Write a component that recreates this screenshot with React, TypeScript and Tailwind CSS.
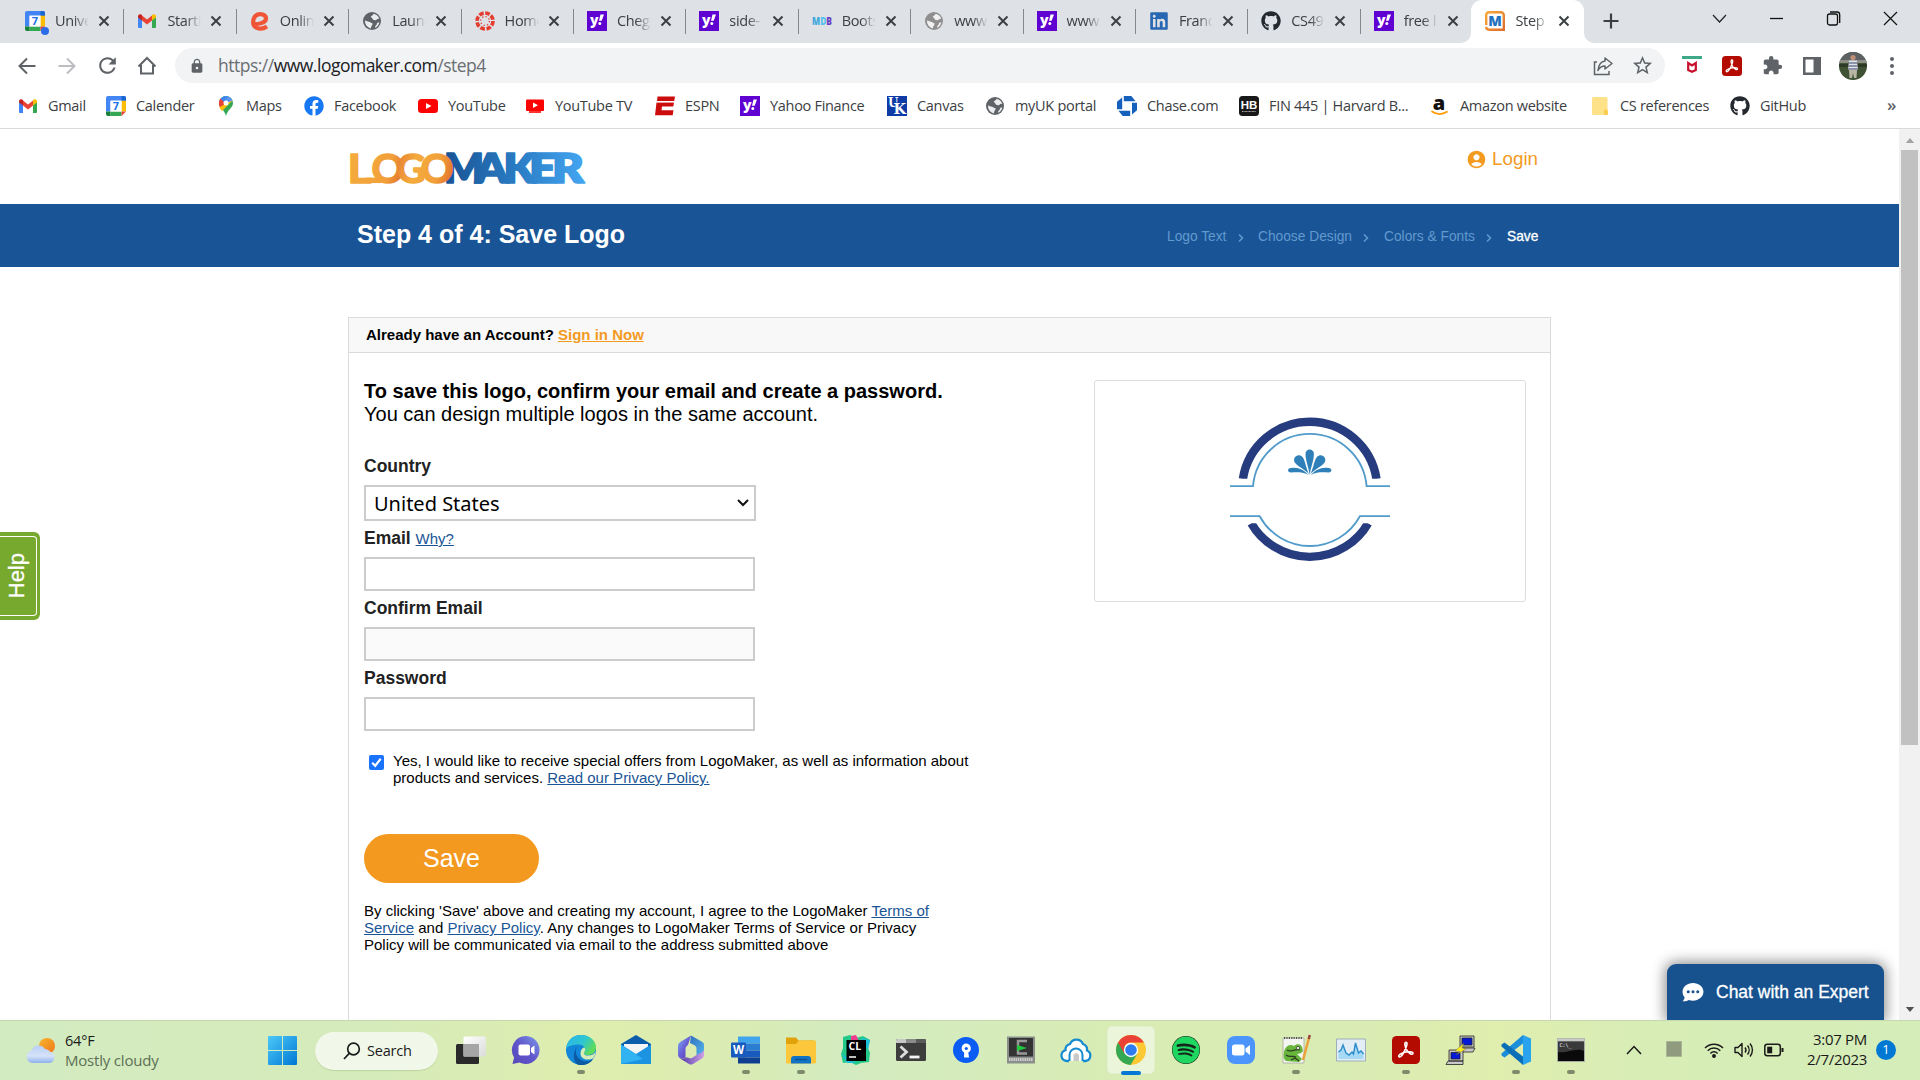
import React from "react";
import { FaGithub, FaLinkedin, FaFacebook, FaSpotify } from "react-icons/fa";
import { MdExtension, MdLock, MdStarBorder, MdRefresh, MdAccountCircle } from "react-icons/md";

/* ---------- small icons (20 x 20) ---------- */

const Svg20 = ({ children }: { children: React.ReactNode }) => (
  <svg viewBox="0 0 20 20" className="block size-5 shrink-0 overflow-visible">
    {children}
  </svg>
);

const Calendar = ({ dot = false }: { dot?: boolean }) => (
  <Svg20>
    <path d="M2 0h16a2 2 0 0 1 2 2v3H0V2a2 2 0 0 1 2-2z" fill="#4285f4" />
    <path d="M0 2h4.500v13.500H0z" fill="#4285f4" />
    <path d="M15.500 4.500H20v11h-4.500z" fill="#fbbc04" />
    <path d="M15.500 0H18a2 2 0 0 1 2 2v2.500h-4.500z" fill="#1967d2" />
    <path d="M4.500 15.500h11V20h-11z" fill="#34a853" />
    <path d="M0 15.500h4.500V20H2a2 2 0 0 1-2-2z" fill="#188038" />
    <path d="M15.500 15.500H20L15.500 20z" fill="#ea4335" />
    <path d="M4.500 4.500h11v11h-11z" fill="#fff" />
    <text x="10" y="14" textAnchor="middle" fontSize="11" fontWeight="700" fontFamily="Open Sans, sans-serif" fill="#1a73e8">7</text>
    {dot && <circle cx="20" cy="20" r="4" fill="#2b6de8" />}
  </Svg20>
);

const Gmail = () => (
  <Svg20>
    <path d="M1 5v11a1 1 0 0 0 1 1h3V8z" fill="#4285f4" />
    <path d="M19 5v11a1 1 0 0 1-1 1h-3V8z" fill="#34a853" />
    <path d="M5 4.500l5 4 5-4v5L10 13.500 5 9.500z" fill="#ea4335" />
    <path d="M1 5.500C1 3 3.500 2.500 5 4v5.500L1 6.500z" fill="#c5221f" />
    <path d="M19 5.500C19 3 16.500 2.500 15 4v5.500l4-3z" fill="#fbbc04" />
  </Svg20>
);

const Expo = () => (
  <Svg20>
    <path d="M3 13c5 .5 13-1 13-5.500C16 2 5.500 1 3.500 8.500 1.500 17 10 20 17 15.500" fill="none" stroke="#f05537" strokeWidth="4.200" />
  </Svg20>
);

const Globe = ({ light = false }: { light?: boolean }) => (
  <svg viewBox="0 0 20 20" className={light ? "block size-5 shrink-0 text-[#8f8f8f]" : "block size-5 shrink-0 text-[#5f6368]"}>
    <circle cx="10" cy="10" r="9" fill="currentColor" />
    <path
      d="M3 9.500c1.500.3 2.500 1.200 4 1.200 1 0 1.500 1.200 2.800 1.400 1 .2 1 1.500.2 2.200-.8.800-.7 2-1.300 3.200A7.500 7.500 0 0 1 3 9.500zM11.500 2.700A7.500 7.500 0 0 1 17.300 8c-1.300-.6-2-.2-2.800.8-.9 1-2.200.3-3.300 0-1-.4-.5-1.600-1.400-2-1.300-.6-1-1.700 0-2 .9-.3 1.400-1 1.700-2.100zM17.300 11.500a7.500 7.500 0 0 1-4.300 5.300c0-1.300.3-2 1.200-2.500.900-.6.300-2 1.300-2.600.6-.3 1.200-.3 1.800-.2z"
      fill="#fff"
      fillOpacity=".88"
    />
  </svg>
);

const CanvasRing = () => (
  <Svg20>
    <circle cx="10" cy="10" r="8" fill="none" stroke="#e43d30" strokeWidth="3.600" strokeDasharray="4.700 1.580" />
    <circle cx="10" cy="10" r="4.400" fill="none" stroke="#e43d30" strokeWidth="1.300" strokeDasharray="1.300 2.156" />
  </Svg20>
);

const Yahoo = () => (
  <Svg20>
    <path d="M0 0h20v20H0z" fill="#5f01d1" />
    <text x="3" y="14" fontSize="14" fontWeight="800" fontFamily="Open Sans, sans-serif" fill="#fff">y</text>
    <path d="M13.500 3.500H17l-2.300 6.300h-2.700z" fill="#fff" />
    <circle cx="12.800" cy="12.500" r="1.500" fill="#fff" />
  </Svg20>
);

const Mdb = () => (
  <Svg20>
    <text x="0" y="13.500" fontSize="10" fontWeight="800" fontFamily="Open Sans, sans-serif" textLength="20" lengthAdjust="spacingAndGlyphs">
      <tspan fill="#3fa9dc">M</tspan>
      <tspan fill="#55c0e8">D</tspan>
      <tspan fill="#6a3fc0">B</tspan>
    </text>
  </Svg20>
);

const LogoFavicon = () => (
  <Svg20>
    <defs>
      <linearGradient id="fav" x1="0" x2="1" y1="0" y2="1">
        <stop offset="0" stopColor="#f6a836" />
        <stop offset="1" stopColor="#e0702c" />
      </linearGradient>
    </defs>
    <path d="M1.200 14V4a3 3 0 0 1 3-2.800h11.600a3 3 0 0 1 3 3v14.600H4a3 3 0 0 1-2.800-3" fill="none" stroke="url(#fav)" strokeWidth="2.400" />
    <text x="10" y="15" textAnchor="middle" fontSize="14" fontWeight="800" fontFamily="Open Sans, sans-serif" fill="#2271bd">M</text>
  </Svg20>
);

const Maps = () => (
  <Svg20>
    <path d="M10 0a7 7 0 0 1 7 7c0 5-5.500 6.500-7 13C8.500 13.500 3 12 3 7a7 7 0 0 1 7-7z" fill="#34a853" />
    <path d="M4.500 2.500L10 7l-5.500 5C1.800 8.500 3 4.500 4.500 2.500z" fill="#ea4335" />
    <path d="M4.500 2.700A7 7 0 0 1 12 .3L8 6z" fill="#4285f4" />
    <path d="M12 .3A7 7 0 0 1 16.500 4.500L12 8 8 6z" fill="#5a95f5" />
    <path d="M16.500 4.500L6 15c-1-1.200-1.700-2-2.300-3.800l6.300-4z" fill="#fbbc04" />
    <circle cx="10" cy="7" r="2.500" fill="#fff" />
  </Svg20>
);

const YouTube = () => (
  <Svg20>
    <rect x="0" y="3" width="20" height="14" rx="3.500" fill="#f00" />
    <path d="M8 7l5.500 3L8 13z" fill="#fff" />
  </Svg20>
);

const YouTubeTV = () => (
  <Svg20>
    <rect x="1" y="3.500" width="18" height="11.500" rx="1" fill="#f00" />
    <path d="M4 15h12v2H4z" fill="#f33" />
    <path d="M8 6.500l5 2.800-5 2.800z" fill="#fff" />
  </Svg20>
);

const Espn = () => (
  <Svg20>
    <path d="M2.500 0.500H20l-.8 4.500H2zM1.500 6.500H19l-.7 4H7l-.5 3.800H18.500l-.8 5H0z" fill="#cc0c0c" />
    <path d="M0 5.700h20" stroke="#fff" strokeWidth="1" />
  </Svg20>
);

const UK = () => (
  <Svg20>
    <path d="M0 0h20v20H0z" fill="#0e3ba6" />
    <g fontWeight="700" fontFamily="DejaVu Serif, serif" fill="#fff">
      <text x="1" y="11" fontSize="12">U</text>
      <text x="6.500" y="17.500" fontSize="14" stroke="#0e3ba6" strokeWidth="1" paintOrder="stroke" textLength="12.500" lengthAdjust="spacingAndGlyphs">K</text>
    </g>
  </Svg20>
);

const Chase = () => (
  <Svg20>
    <g fill="#1560bd">
      <path d="M6.800 0h7.500l4.300 5.300H6.800z" />
      <path d="M20 6.800v7.500l-5 4.300V6.800z" />
      <path d="M13.200 20H5.700l-4.300-5.300h11.800z" />
      <path d="M0 13.200V5.700l5.200-4.300v11.800z" />
    </g>
  </Svg20>
);

const Harvard = () => (
  <Svg20>
    <rect width="20" height="20" rx="3.500" fill="#191919" />
    <text x="10" y="13" textAnchor="middle" fontSize="11.500" fontWeight="700" fontFamily="Liberation Sans, sans-serif" fill="#fff">HB</text>
    <path d="M3 15.500h14" stroke="#aaa" strokeWidth="1" strokeDasharray="1 .4" />
  </Svg20>
);

const Amazon = () => (
  <Svg20>
    <text x="9" y="13.500" textAnchor="middle" fontSize="20" fontWeight="800" fontFamily="Open Sans, sans-serif" fill="#111">a</text>
    <path d="M2 15.500c5 3.500 10.500 3 15 .3" fill="none" stroke="#f90" strokeWidth="1.700" strokeLinecap="round" />
  </Svg20>
);

const Folder = () => (
  <Svg20>
    <path d="M2 2.500A1.500 1.500 0 0 1 3.500 1H16a1.500 1.500 0 0 1 1.500 1.500v11L18 18a1 1 0 0 1-1 1H3.500A1.500 1.500 0 0 1 2 17.500z" fill="#fde28a" />
    <path d="M14 19v-4.500a1 1 0 0 1 1-1h2.500L18 18a1 1 0 0 1-1 1z" fill="#f8cd50" />
  </Svg20>
);

const AcrobatGlyph = ({ scale }: { scale: string }) => (
  <path
    transform={scale}
    d="M10 4.200c1.800 0 .8 3-.8 6.500-1.500 3.200-3.400 5.500-4.400 5.200-1.600-.7 1.200-3.200 5.400-3.900 4-.6 5.800.2 5.500 1.200-.6 1.600-3.300-.3-4.800-2.500C9.500 8.600 8.600 4.200 10 4.200z"
    fill="none"
    stroke="#fff"
    strokeWidth="1.300"
  />
);

/* ---------- browser chrome ---------- */

const tabs = [
  { t: "Unive", i: <Calendar dot /> },
  { t: "Startin", i: <Gmail /> },
  { t: "Online", i: <Expo /> },
  { t: "Launc", i: <Globe /> },
  { t: "Home", i: <CanvasRing /> },
  { t: "Chegg", i: <Yahoo /> },
  { t: "side-", i: <Yahoo /> },
  { t: "Boots", i: <Mdb /> },
  { t: "www.", i: <Globe light /> },
  { t: "www.", i: <Yahoo /> },
  { t: "Franc", i: <FaLinkedin className="block size-5 text-[#2867b2]" /> },
  { t: "CS49", i: <FaGithub className="block size-5 text-[#24292f]" /> },
  { t: "free l", i: <Yahoo /> },
  { t: "Step", i: <LogoFavicon />, active: true },
];

const TabStrip = () => (
  <div className="flex h-[43px] w-full shrink-0 bg-[#dee1e6] pl-[11px]">
    {tabs.map((tab, n) => (
      <div
        key={n}
        className={
          "relative flex w-[112.4px] shrink-0 items-center pl-[14px] pb-px " +
          (tab.active ? "-ml-[0.600px] rounded-t-[11px] bg-white" : "")
        }
      >
        {tab.active && (
          <>
            <svg className="absolute -left-[10px] bottom-0 size-[10px]" viewBox="0 0 10 10"><path d="M10 0v10H0A10 10 0 0 0 10 0z" fill="#fff" /></svg>
            <svg className="absolute -right-[10px] bottom-0 size-[10px]" viewBox="0 0 10 10"><path d="M0 0v10h10A10 10 0 0 1 0 0z" fill="#fff" /></svg>
          </>
        )}
        {tab.i}
        <span className="ml-[10px] w-[34px] overflow-hidden whitespace-nowrap text-[14.500px] tracking-[-0.35px] text-[#3c4043] [mask-image:linear-gradient(to_right,#000_55%,transparent)]">
          {tab.t}
        </span>
        <svg viewBox="0 0 12 12" className="ml-[9px] size-[12px] shrink-0" stroke="#3c4043" strokeWidth="2"><path d="M1.500 1.500l9 9M10.500 1.500l-9 9" /></svg>
        {n < 12 && <div className="absolute -right-[1px] top-[9px] h-[25px] w-px bg-[#84878b]" />}
      </div>
    ))}
    <div className="ml-[19px] flex items-center pb-px">
      <svg viewBox="0 0 16 16" className="size-4" stroke="#3c4043" strokeWidth="2.200"><path d="M8 .5v15M.5 8h15" /></svg>
    </div>
    <div className="ml-[93px] flex items-center gap-[42px] pb-[6px]">
      <svg viewBox="0 0 15 15" className="size-[15px]" fill="none" stroke="#222" strokeWidth="1.200"><path d="M1 4l6.500 7L14 4" /></svg>
      <svg viewBox="0 0 15 15" className="size-[15px]" fill="none" stroke="#111" strokeWidth="1.300"><path d="M1 7.500h13" /></svg>
      <svg viewBox="0 0 15 15" className="size-[15px]" fill="none" stroke="#111" strokeWidth="1.300"><rect x="1.500" y="3" width="10" height="11" rx="2" /><path d="M4 1h7a2.700 2.700 0 0 1 2.700 2.700V12" /></svg>
      <svg viewBox="0 0 15 15" className="size-[15px]" fill="none" stroke="#111" strokeWidth="1.200"><path d="M1 1l13 13M14 1L1 14" /></svg>
    </div>
  </div>
);

const Toolbar = () => (
  <div className="flex h-[45px] w-full shrink-0 items-center bg-white pl-[17px]">
    <svg viewBox="0 0 20 20" className="size-5" fill="none" stroke="#5f6368" strokeWidth="2"><path d="M18.500 10H3M10 2.500L2.500 10l7.500 7.500" /></svg>
    <svg viewBox="0 0 20 20" className="ml-5 size-5" fill="none" stroke="#bcbec1" strokeWidth="2"><path d="M1.500 10H17M10 2.500l7.500 7.500-7.500 7.500" /></svg>
    <MdRefresh className="ml-[18px] size-[25px] text-[#5f6368]" />
    <svg viewBox="0 0 20 20" className="ml-[17px] size-5" fill="none" stroke="#5f6368" strokeWidth="2"><path d="M1.500 10.500L10 2l8.500 8.500M4 9v8.500h12V9" /></svg>
    <div className="ml-[18px] flex h-[35px] w-[1490px] items-center rounded-full bg-[#f1f3f4] pl-[14px] pr-[11px]">
      <MdLock className="size-4 text-[#5f6368]" />
      <div className="ml-[13px] grow whitespace-nowrap text-[17.500px] tracking-[-0.5px] text-[#6a6e73]">
        https://<span className="text-[#202124]">www.logomaker.com</span>/step4
      </div>
      <svg viewBox="0 0 20 20" className="mr-[18px] size-5" fill="none" stroke="#5f6368" strokeWidth="1.500"><path d="M4 6H1.500v12.500H16V15" /><path d="M12 2l7 5.500-7 5.500V10c-3.500 0-5.500 1.500-7 4.500C5.500 9 8 5.500 12 5z" strokeLinejoin="round" /></svg>
      <MdStarBorder className="size-[23px] text-[#5f6368]" />
    </div>
    <svg viewBox="0 0 20 20" className="ml-[17px] size-5"><path d="M0 0h20v3H0z" fill="#3fa98a" /><path d="M6.200 14V7L10 9.500 13.800 7V14L10 15.800z" fill="none" stroke="#c8102e" strokeWidth="2.200" /></svg>
    <svg viewBox="0 0 20 20" className="ml-5 size-5"><rect width="20" height="20" rx="3.500" fill="#b30b00" /><AcrobatGlyph scale="translate(-.2 -.2)" /></svg>
    <MdExtension className="ml-5 size-[21px] text-[#5f6368]" />
    <svg viewBox="0 0 20 20" className="ml-[19px] size-5"><path d="M1 1h18v18H1z" fill="#5f6368" /><path d="M3.500 3.500h8v13h-8z" fill="#fff" /></svg>
    <svg viewBox="0 0 28 28" className="ml-[17px] size-7">
      <defs><clipPath id="av"><circle cx="14" cy="14" r="14" /></clipPath></defs>
      <g clipPath="url(#av)">
        <path d="M0 0h28v28H0z" fill="#3f5233" />
        <path d="M0 0h28v8H0z" fill="#5d6164" />
        <path d="M0 8h28v3H0z" fill="#8d8f86" />
        <path d="M0 12h28v3H0z" fill="#2d3b26" />
        <circle cx="14" cy="5.500" r="2.600" fill="#c08f78" />
        <path d="M10 8.500h8l1 9.500H9z" fill="#dfe3ea" />
        <path d="M9.500 11h9M9.500 14h9M9 17h10" stroke="#3c4566" strokeWidth="1" />
        <path d="M10 18h8l-.5 8h-2.500l-1-5-1 5h-2.500z" fill="#b9b6a4" />
      </g>
    </svg>
    <svg viewBox="0 0 6 20" className="ml-[22px] h-5 w-[6px]" fill="#5f6368"><circle cx="3" cy="3" r="2" /><circle cx="3" cy="10" r="2" /><circle cx="3" cy="17" r="2" /></svg>
  </div>
);

const bookmarks = [
  { t: "Gmail", w: 88, i: <Gmail /> },
  { t: "Calender", w: 110, i: <Calendar /> },
  { t: "Maps", w: 88, i: <Maps /> },
  { t: "Facebook", w: 114, i: <FaFacebook className="block size-5 text-[#1877f2]" /> },
  { t: "YouTube", w: 107, i: <YouTube /> },
  { t: "YouTube TV", w: 130, i: <YouTubeTV /> },
  { t: "ESPN", w: 85, i: <Espn /> },
  { t: "Yahoo Finance", w: 147, i: <Yahoo /> },
  { t: "Canvas", w: 98, i: <UK /> },
  { t: "myUK portal", w: 132, i: <Globe /> },
  { t: "Chase.com", w: 122, i: <Chase /> },
  { t: "FIN 445 | Harvard B...", w: 191, i: <Harvard /> },
  { t: "Amazon website", w: 160, i: <Amazon /> },
  { t: "CS references", w: 140, i: <Folder /> },
  { t: "GitHub", w: 157, i: <FaGithub className="block size-5 text-[#24292f]" /> },
];

const Bookmarks = () => (
  <div className="flex h-[41px] w-full shrink-0 items-center border-b border-[#d8dadd] bg-white pb-[4px] pl-[18px]">
    {bookmarks.map((b) => (
      <div key={b.t} className="flex shrink-0 items-center gap-[10px]" style={{ width: b.w }}>
        {b.i}
        <span className="whitespace-nowrap text-[14.500px] tracking-[-0.3px] text-[#3c4043]">{b.t}</span>
      </div>
    ))}
    <span className="pb-[4px] text-[17px] font-semibold leading-none text-[#5f6368]">»</span>
  </div>
);

/* ---------- page ---------- */

const Wordmark = () => (
  <svg viewBox="0 0 240 36" className="mt-[21px] block h-[36px] w-[240px] overflow-visible" fontFamily="Lato, sans-serif">
    <defs>
      <linearGradient id="o1" gradientUnits="userSpaceOnUse" x1="0" x2="54" y1="10" y2="26"><stop offset="0" stopColor="#f4ab3c" /><stop offset=".7" stopColor="#f2a03a" /><stop offset="1" stopColor="#e0732c" /></linearGradient>
      <linearGradient id="o2" gradientUnits="userSpaceOnUse" x1="48" x2="104" y1="10" y2="26"><stop offset="0" stopColor="#e88436" /><stop offset=".3" stopColor="#f4ab3c" /><stop offset=".7" stopColor="#f2a03a" /><stop offset="1" stopColor="#e0702c" /></linearGradient>
      <linearGradient id="b1" gradientUnits="userSpaceOnUse" x1="98" x2="236" y1="0" y2="0"><stop offset="0" stopColor="#1a5596" /><stop offset=".5" stopColor="#2a7cc4" /><stop offset="1" stopColor="#45a6f2" /></linearGradient>
    </defs>
    <g fontSize="41" fontWeight="800" fill="url(#b1)" stroke="url(#b1)" strokeWidth="1.600" strokeLinejoin="round">
      <text x="94" y="32.500" textLength="40" lengthAdjust="spacingAndGlyphs">M</text>
      <text x="125" y="32.500" textLength="33" lengthAdjust="spacingAndGlyphs">A</text>
      <text x="153.500" y="32.500" textLength="32" lengthAdjust="spacingAndGlyphs">K</text>
      <text x="179" y="32.500" textLength="28" lengthAdjust="spacingAndGlyphs">E</text>
      <text x="202" y="32.500" textLength="32" lengthAdjust="spacingAndGlyphs">R</text>
    </g>
    <g fontSize="41" fontWeight="700" strokeWidth="1.600" strokeLinejoin="round">
      <text x="-2.500" y="32.500" fill="url(#o1)" stroke="url(#o1)" textLength="24" lengthAdjust="spacingAndGlyphs">L</text>
      <path d="M16 30.300h20" fill="none" stroke="url(#o1)" strokeWidth="5.500" />
      <text x="21.500" y="32.500" fill="url(#o1)" stroke="url(#o1)" textLength="33" lengthAdjust="spacingAndGlyphs">O</text>
      <text x="46.500" y="32.500" fill="url(#o2)" stroke="url(#o2)" textLength="29" lengthAdjust="spacingAndGlyphs">G</text>
      <text x="70.500" y="32.500" fill="url(#o2)" stroke="url(#o2)" textLength="33" lengthAdjust="spacingAndGlyphs">O</text>
    </g>
  </svg>
);

const Crumb = ({ children, w }: { children: React.ReactNode; w: string }) => (
  <div className={"flex items-center justify-between text-[#6299cf] " + w}>
    <span>{children}</span>
    <svg viewBox="0 0 6 8" className="h-[8px] w-[6px]" fill="none" stroke="#6299cf" strokeWidth="1.500"><path d="M1 .5L4.500 4 1 7.500" /></svg>
  </div>
);

const Link = ({ children }: { children: React.ReactNode }) => (
  <a className="text-[#195596] underline">{children}</a>
);

const Emblem = () => (
  <svg viewBox="0 0 160 144" className="h-[144px] w-[160px] overflow-visible" fill="none">
    <path d="M12.900 61A67.600 67.600 0 0 1 146.500 61" stroke="#263c7e" strokeWidth="8.400" />
    <path d="M21.300 105.300A67.600 67.600 0 0 0 138.100 105.300" stroke="#263c7e" strokeWidth="8.400" />
    <path d="M0 60.800h28V76H0zM132 60.800h28V76h-28zM0 90h160v15.300H0z" fill="#fff" />
    <path d="M0 68.200h23A57 57 0 0 1 136.600 68.200H160" stroke="#519bcb" strokeWidth="1.800" />
    <path d="M0 98.200h29.700A57 57 0 0 0 129.900 98.200H160" stroke="#519bcb" strokeWidth="1.800" />
    <g fill="#2f80b9">
      <path d="M79.700 57C79 50 75.500 43 75.500 35.700a4.200 4.200 0 0 1 8.400 0C83.900 43 80.400 50 79.700 57z" />
      <path transform="rotate(-36 79.700 57)" d="M79.700 56C79 50 74.900 43 74.900 38.500a4.800 4.800 0 0 1 9.600 0C84.500 43 80.400 50 79.700 56z" />
      <path transform="rotate(36 79.700 57)" d="M79.700 56C79 50 74.900 43 74.900 38.500a4.800 4.800 0 0 1 9.600 0C84.500 43 80.400 50 79.700 56z" />
      <path d="M78.500 57C72 53.500 66 54.500 61 54.500c-4-.3-4-4.300 0-4.500 7-1.300 13 2 17.500 7z" />
      <path d="M80.900 57c6.500-3.500 12.500-2.500 17.500-2.500 4-.3 4-4.300 0-4.500-7-1.300-13 2-17.500 7z" />
    </g>
  </svg>
);

const Page = () => (
  <main className="relative h-full w-[1899px] shrink-0 overflow-hidden bg-white font-['Liberation_Sans',Arial,sans-serif] text-black">
    <header className="ml-[350px] flex h-[75px] w-[1188px] justify-between">
      <Wordmark />
      <div className="mt-[19px] flex h-[22px] items-center gap-[5px] text-[18.750px] text-[#f39a1f]">
        <MdAccountCircle className="size-[21px]" />
        <span>Login</span>
      </div>
    </header>
    <div className="flex h-[63px] items-center bg-[#195596] pl-[357px]">
      <h1 className="w-[810px] pb-[2px] text-[25px] font-bold text-white">Step 4 of 4: Save Logo</h1>
      <div className="flex whitespace-nowrap pt-[4px] text-[13.750px]">
        <Crumb w="w-[77px] mr-[14px]">Logo Text</Crumb>
        <Crumb w="w-[111px] mr-[15px]">Choose Design</Crumb>
        <Crumb w="w-[108px] mr-[15px]">Colors &amp; Fonts</Crumb>
        <span className="text-white [-webkit-text-stroke:0.3px_#fff]">Save</span>
      </div>
    </div>

    <section className="ml-[348px] mt-[50px] h-[760px] w-[1203px] border border-[#dbdbdb]">
      <div className="flex h-[35px] items-center border-b border-[#dbdbdb] bg-[#f8f8f8] pl-[17px] text-[15px] font-bold">
        <span>Already have an Account? <a className="text-[#f39a1f] underline">Sign in Now</a></span>
      </div>
      <div className="flex justify-between pl-[15px] pr-[24px]">
        <form className="pt-[27px] text-[15px] leading-[17px]">
          <p className="whitespace-nowrap text-[20px] leading-[23px]">
            <b>To save this logo, confirm your email and create a password.</b>
            <br />
            You can design multiple logos in the same account.
          </p>
          <div className="mt-[30px] text-[17.500px] font-bold leading-[20px] text-[#222]">Country</div>
          <div className="mt-[9px] flex h-[36px] w-[392px] items-center justify-between border-2 border-[#ccc] pl-[8px] pr-[5px] font-['Noto_Sans',sans-serif] text-[20px]">
            United States
            <svg viewBox="0 0 12 8" className="h-2 w-3" fill="none" stroke="#111" strokeWidth="2"><path d="M1 1l5 5 5-5" /></svg>
          </div>
          <div className="mt-[7px] h-[20px] text-[17.500px] font-bold leading-[20px] text-[#222]">
            Email <span className="text-[15px] font-normal"><Link>Why?</Link></span>
          </div>
          <div className="mt-[9px] h-[34px] w-[391px] border-2 border-[#ccc]" />
          <div className="mt-[7px] text-[17.500px] font-bold leading-[20px] text-[#222]">Confirm Email</div>
          <div className="mt-[9px] h-[34px] w-[391px] border-2 border-[#ccc] bg-[#fafafa]" />
          <div className="mt-[7px] text-[17.500px] font-bold leading-[20px] text-[#222]">Password</div>
          <div className="mt-[9px] h-[34px] w-[391px] border-2 border-[#ccc]" />
          <div className="mt-[21px] flex gap-[9px] whitespace-nowrap pl-[5px]">
            <svg viewBox="0 0 15 15" className="mt-[3px] size-[15px]"><rect width="15" height="15" rx="2" fill="#1a73ff" /><path d="M3.200 7.800l3 3 5.500-7" fill="none" stroke="#fff" strokeWidth="2.200" /></svg>
            <p>
              Yes, I would like to receive special offers from LogoMaker, as well as information about
              <br />
              products and services. <Link>Read our Privacy Policy.</Link>
            </p>
          </div>
          <div className="mt-[48px] flex h-[49px] w-[175px] items-center justify-center rounded-full bg-[#f3991f] text-[25px] text-white">Save</div>
          <p className="mt-[19px] whitespace-nowrap">
            By clicking 'Save' above and creating my account, I agree to the LogoMaker <Link>Terms of</Link>
            <br />
            <Link>Service</Link> and <Link>Privacy Policy</Link>. Any changes to LogoMaker Terms of Service or Privacy
            <br />
            Policy will be communicated via email to the address submitted above
          </p>
        </form>
        <div className="mt-[27px] flex h-[222px] w-[432px] justify-center rounded-[3px] border border-[#ddd] pt-[37px]">
          <Emblem />
        </div>
      </div>
    </section>

    {/* floating help tab */}
    <div className="absolute left-0 top-[403px] h-[88px] w-[40px] rounded-r-[6px] bg-[#77a92f] py-[4px] pr-[3px]">
      <div className="flex h-full w-full items-center justify-center rounded-r-[4px] border border-l-0 border-white">
        <span className="-translate-x-px rotate-180 text-[22px] leading-none text-white [-webkit-text-stroke:0.3px_#fff] [writing-mode:vertical-rl]">Help</span>
      </div>
    </div>

    {/* floating chat button */}
    <div className="absolute bottom-0 left-[1667px] flex h-[56px] w-[217px] items-center rounded-t-[9px] bg-[#17528f] pl-[15px] shadow-[0_0_14px_2px_rgba(0,0,0,0.45)]">
      <svg viewBox="0 0 22 20" className="h-[19px] w-[22px]"><path d="M11 0c6 0 11 4 11 9.300s-5 9.300-11 9.300c-1.600 0-3-.2-4.300-.7C5 18.800 3 19.500 0 19.300 1.500 18 2 16.500 2.200 15.300 1 13.700 0 11.700 0 9.300 0 4 5 0 11 0z" fill="#fff" /><g fill="#17528f"><circle cx="6" cy="9.300" r="1.600" /><circle cx="11" cy="9.300" r="1.600" /><circle cx="16" cy="9.300" r="1.600" /></g></svg>
      <span className="ml-[12px] whitespace-nowrap text-[17.500px] text-white [-webkit-text-stroke:0.3px_#fff]">Chat with an Expert</span>
    </div>
  </main>
);

const Scrollbar = () => (
  <div className="flex h-full w-[21px] flex-col items-center justify-between bg-[#f1f1f1]">
    <div className="flex flex-col items-center">
      <svg viewBox="0 0 10 6" className="mb-[7px] mt-[9px] h-[5px] w-[10px]"><path d="M0 6l5-6 5 6z" fill="#a3a3a3" /></svg>
      <div className="h-[595px] w-[17px] bg-[#c1c1c1]" />
    </div>
    <svg viewBox="0 0 10 6" className="mb-[8px] h-[5px] w-[10px]"><path d="M0 0l5 6 5-6z" fill="#505050" /></svg>
  </div>
);

/* ---------- taskbar ---------- */

const Svg30 = ({ children }: { children: React.ReactNode }) => (
  <svg viewBox="0 0 30 30" className="block size-[30px] overflow-visible">{children}</svg>
);

const apps: { i: React.ReactNode; run?: boolean; active?: boolean }[] = [
  { i: <Svg30><defs><linearGradient id="tv" x1="0" x2="1" y1="0" y2="1"><stop offset="0" stopColor="#fff" /><stop offset="1" stopColor="#d9dcd8" /></linearGradient></defs><rect x="0" y="9" width="23" height="20" rx="1.500" fill="#2a2a2a" /><rect x="7.500" y="1.500" width="22.500" height="20" rx="1.500" fill="url(#tv)" /><path d="M7.500 9H23v12.500H7.500z" fill="#a6a6a6" /></Svg30> },
  { i: <Svg30><defs><linearGradient id="tc" x1="0" x2="1" y1="1" y2="0"><stop offset="0" stopColor="#5547b8" /><stop offset=".5" stopColor="#6057cc" /><stop offset="1" stopColor="#7d9ae8" /></linearGradient></defs><path d="M15 1a14 14 0 1 1-6.500 26.600L1.500 29l1.600-6.500A14 14 0 0 1 15 1z" fill="url(#tc)" /><rect x="7.500" y="9.500" width="11.500" height="11" rx="2" fill="#fff" /><path d="M20 13l3.500-2.500v9L20 17z" fill="#fff" /></Svg30> },
  { run: true, i: <Svg30><defs><linearGradient id="eg" x1="0" x2="1" y1="0" y2=".5"><stop offset="0" stopColor="#2bb4e8" /><stop offset=".6" stopColor="#2fc6d0" /><stop offset="1" stopColor="#5fdc5a" /></linearGradient></defs><circle cx="15" cy="15" r="15" fill="#1286d8" /><path d="M0 14C1 5 7 0 15 0c9 0 15 6 15 12.500 0 5-4 7.500-8 7.500-3.500 0-5-1.500-4-3 2-3 0-7.500-5-7.500C7 9.500 1.500 11 0 14z" fill="url(#eg)" /><path d="M12 11c-3 3-3 9 1 12.500 4.500 4 11 3.500 14.500 0C24 29 18 31 12 29.700 7 28 6 16 12 11z" fill="#0c59a4" /><path d="M18.500 16.500c-1.500 2 0 4 3.500 4 3 0 6-1 7.500-4-.3 2.500-1 5-2 6.500-5 3-13 1.500-13-4.500 0-3 1.500-5.500 3.500-6 1.700 1 1.500 3 .5 4z" fill="#d9ecb6" /></Svg30> },
  { i: <Svg30><path d="M0 9L15 0l15 9v6H0z" fill="#0b5cab" /><path d="M3 9h24v10H3z" fill="#f2f4f6" /><path d="M0 9.500L15 19l15-9.500V29H0z" fill="#1c93e0" /><path d="M0 29V9.500L22 24z" fill="#31b3f2" /></Svg30> },
  { i: <Svg30><defs><linearGradient id="ms" x1="0" x2="1" y1="0" y2="1"><stop offset="0" stopColor="#7fb8f0" /><stop offset=".5" stopColor="#6a5fd8" /><stop offset="1" stopColor="#5a3aa8" /></linearGradient><linearGradient id="ms2" x1="0" x2="1" y1="0" y2="0"><stop offset="0" stopColor="#4f3aa8" /><stop offset="1" stopColor="#cf9fe6" /></linearGradient><linearGradient id="ms3" x1="0" x2="1" y1="0" y2="1"><stop offset="0" stopColor="#2f6fc0" /><stop offset="1" stopColor="#52b4ea" /></linearGradient></defs><path d="M15 .5L5 6.500C3 7.700 2 9 2 11v8.500c0 4 4 5.500 7.500 3V14c0-2 1-3 2.500-4z" fill="url(#ms)" /><path d="M15 .5l11 6.300c1.500.9 2 2 2 3.700v8l-7.500 2V13.500c0-1.500-.6-2.500-2-3.300L14 8z" fill="url(#ms3)" /><path d="M28 15v5c0 1.500-.7 2.700-2 3.500L17 29c-1.300.7-2.700.7-4 0l-9-5.500c3 .8 5-.3 6.500-1.300l4.500 1.300 5.500-3.500c2-1.500 5-1 7.500-5z" fill="url(#ms2)" /></Svg30> },
  { run: true, i: <Svg30><path d="M7 1.500h22v7H7z" fill="#41a5ee" /><path d="M7 8.500h22v7H7z" fill="#2b7cd3" /><path d="M7 15.500h22v7H7z" fill="#185abd" /><path d="M7 22.500h22v6H7z" fill="#103f91" /><rect x="0" y="7.500" width="15" height="15" rx="1" fill="#185abd" /><text x="7.500" y="19" textAnchor="middle" fontSize="11.500" fontWeight="700" fontFamily="Open Sans, sans-serif" fill="#fff">W</text></Svg30> },
  { run: true, i: <Svg30><path d="M0 2.500h10l2.500 3H28V12H0z" fill="#e2a20c" /><path d="M0 9h10l3-3.500h16a1 1 0 0 1 1 1V27.500a1 1 0 0 1-1 1H1a1 1 0 0 1-1-1z" fill="#fcc73a" /><path d="M5 28.500V24a3 3 0 0 1 3-3h14a3 3 0 0 1 3 3v4.500z" fill="#1173c4" /><path d="M9 24.500h12" stroke="#0b4f8f" strokeWidth="1.200" /></Svg30> },
  { i: <Svg30><path d="M2 2l7-2 6 3 7-2 7 4-2 8 2 5-1 9-8 1-5 2-6-3-7 1-2-9 2-6z" fill="#22c98a" /><path d="M20 3l9 2-2 10zM1 19l5 9 9 0z" fill="#1cbfd8" /><path d="M10 1l5-1 3 6h-8z" fill="#ee3d8f" /><path d="M5.500 5h19.500v21H5.500z" fill="#000" /><text x="7.500" y="15" fontSize="10.500" fontWeight="700" fontFamily="Open Sans, sans-serif" fill="#fff">CL</text><path d="M8 22h7" stroke="#fff" strokeWidth="1.500" /></Svg30> },
  { i: <Svg30><rect x="0" y="4" width="30" height="22" rx="1.500" fill="#3d3d3d" /><path d="M1 4h9v4H0V5z" fill="#c8c8c8" /><path d="M10 4h10v4H10z" fill="#8a8a8a" /><path d="M20 4h9l1 1v3H20z" fill="#5a5a5a" /><path d="M4.500 11.500l6 5.500-6 5.500" fill="none" stroke="#ddd" strokeWidth="2.800" /><path d="M13.500 22h10" stroke="#f4f4f4" strokeWidth="2.800" /></Svg30> },
  { i: <Svg30><circle cx="15" cy="15" r="13" fill="#0a5cf5" /><path d="M15 8.500a4.800 4.800 0 0 1 2.300 9L18 22.500h-5l.2-5A4.800 4.800 0 0 1 15 8.500z" fill="#fff" /><circle cx="15.300" cy="13.500" r="1.600" fill="#0a5cf5" /></Svg30> },
  { i: <Svg30><path d="M1 1.500h28v27H1z" fill="#8b8f8b" /><path d="M3 3h24v18.500H3z" fill="#333" /><path d="M3 24.500h24" stroke="#ccc" strokeWidth="3" strokeDasharray="1.500 .7" /><path d="M21 6h-9v12.500h9" fill="none" stroke="#999" strokeWidth="2.500" /><path d="M11 10l10 3-10 3z" fill="#25c93c" /></Svg30> },
  { i: <Svg30><path d="M8 26H6a5.500 5.500 0 0 1-1.500-10.800A6 6 0 0 1 9 9a7 7 0 0 1 13 0 6 6 0 0 1 4 6.500A5.500 5.500 0 0 1 24.500 26H22" fill="#fff" stroke="#168bcf" strokeWidth="2.300" /><path d="M8.500 26v-6a6.500 6.500 0 0 1 13 0v6" fill="#fff" stroke="#168bcf" strokeWidth="2" /><path d="M12.500 26v-5a2.700 2.700 0 0 1 5.500 0v5z" fill="#c9c9c9" /></Svg30> },
  { run: true, active: true, i: <Svg30><circle cx="15" cy="15" r="15" fill="#fcc934" /><path d="M2 7.500A15 15 0 0 0 14.500 30l7-11.500L15 15z" fill="#34a853" /><path d="M2 7.500A15 15 0 0 1 28 7.500H15a7.500 7.500 0 0 0-7 5l.3 6z" fill="#ea4335" /><circle cx="15" cy="15" r="7.200" fill="#fff" /><circle cx="15" cy="15" r="5.800" fill="#2f7cf0" /></Svg30> },
  { i: <FaSpotify className="block size-[28px] rounded-full bg-[#16251a] text-[#1fd760]" /> },
  { i: <Svg30><rect x="1" y="1" width="28" height="28" rx="8" fill="#4a94fb" /><rect x="6" y="9.500" width="12.500" height="11" rx="2.500" fill="#fff" /><path d="M19.500 13.500l4.500-3.500v10l-4.500-3.500z" fill="#fff" /></Svg30> },
  { run: true, i: <Svg30><path d="M2 3h21v25H2z" fill="#f3f5f1" stroke="#a5aaa0" strokeWidth=".8" /><path d="M3 3h19" stroke="#555" strokeWidth="2" strokeDasharray="1.200 1.200" /><path d="M4 14c2-4 6-5 9-3 3-3 7-2 8 1l1 4c-1 2-4 3-6 3l5 5-3 3-13-1c-3-2-3-8-1-12z" fill="#67b53a" /><path d="M6 15c4 3 8-2 13 0M5 20c4 3 7 0 10 2M10 25l4-2 4 3" stroke="#2d3f22" strokeWidth="1.300" fill="none" /><circle cx="17" cy="13" r="1.600" fill="#eef6e6" stroke="#333" strokeWidth=".7" /><path d="M28 3L22 25" stroke="#eda13a" strokeWidth="2.500" /><path d="M28.800 0L27.800 4" stroke="#98453a" strokeWidth="2.500" /></Svg30> },
  { i: <Svg30><path d="M.5 4h29v22H.5z" fill="#e2edf6" stroke="#9faeb9" /><path d="M2.500 24v-7l2.500-2 2-5 3 8 3 2 3-3 1.500 2 2-11 3 10 2.500-2 2.500 3v5z" fill="#a5d9f6" /><path d="M2.500 17l2.500-2 2-5 3 8 3 2 3-3 1.500 2 2-11 3 10 2.500-2 2.500 3" fill="none" stroke="#2c8dcc" strokeWidth="1.400" /></Svg30> },
  { run: true, i: <Svg30><rect x="1" y="1" width="28" height="28" rx="4.500" fill="#b30b00" /><AcrobatGlyph scale="translate(2.300 2) scale(1.250)" /></Svg30> },
  { i: <Svg30><g stroke="#222" strokeWidth=".8"><path d="M14 1h14v11H14zM13 13h16l-2 4H11z" fill="#c9c9c9" /><path d="M16 3h10v7H16z" fill="#0618d8" /><path d="M3 15h14v11H3zM2 26h15v3.500H0z" fill="#c9c9c9" /><path d="M5 17.500h9v6.500H5z" fill="#0618d8" /><path d="M18 8l-9 8 5 .5L10 20l10-6-4-1z" fill="#ffee1f" stroke="#554" strokeWidth=".4" /></g></Svg30> },
  { run: true, i: <Svg30><path d="M22 0l8 3.500v23L22 30z" fill="#2aa3ee" /><path d="M22 0v8.500L3.500 22.500.5 20.500v-2z" fill="#1a8ddb" /><path d="M22 30v-8.500L3.500 7.500.5 9.500v2z" fill="#0b6fb8" /></Svg30> },
  { run: true, i: <Svg30><path d="M1.500 3.500h27v23h-27z" fill="#0a0a0a" stroke="#a7aba5" /><path d="M1.500 3.500h27v3h-27z" fill="#c6c9c4" /><path d="M2 7h26v9C20 12 10 19 2 17z" fill="#3a3a3a" /><text x="3.500" y="12" fontSize="5" fontFamily="DejaVu Sans Mono, monospace" fill="#fff">C:\_</text></Svg30> },
];

const Taskbar = () => (
  <footer className="flex h-[60px] w-full shrink-0 items-center border-t border-[#c6d8ae] bg-[linear-gradient(90deg,#d3ebc1_0%,#d6ebba_20%,#dfeeae_31%,#daecb3_38%,#d3ebc0_44%,#d9ecb4_60%,#d9ecb4_70%,#e0eeae_78%,#d8edb6_85%,#d5edb9_100%)] pl-[26px] text-[#1a1a1a]">
    <svg viewBox="0 0 30 28" className="h-[28px] w-[30px]">
      <defs><linearGradient id="cl" x1="0" x2="0" y1="0" y2="1"><stop offset="0" stopColor="#b9cff7" /><stop offset=".6" stopColor="#d5e2f8" /><stop offset="1" stopColor="#8db2ee" /></linearGradient><linearGradient id="sun" x1="0" x2="1" y1="0" y2="1"><stop offset="0" stopColor="#f7b52c" /><stop offset="1" stopColor="#f0761c" /></linearGradient></defs>
      <circle cx="21" cy="9" r="8" fill="url(#sun)" />
      <path d="M6.500 26a6.200 6.200 0 0 1-1-12.200A7.500 7.500 0 0 1 19 12a6.800 6.800 0 0 1 5 2.500A6 6 0 0 1 24 26z" fill="url(#cl)" />
    </svg>
    <div className="ml-[9px] w-[203px] text-[15px] tracking-[-0.2px]">
      <div className="text-[14.500px] leading-[20px]">64°F</div>
      <div className="leading-[19px] text-[#5c6f55]">Mostly cloudy</div>
    </div>
    <svg viewBox="0 0 29 29" className="size-[29px]">
      <defs><linearGradient id="win" x1="0" x2="1" y1="0" y2="1"><stop offset="0" stopColor="#4cc9f8" /><stop offset="1" stopColor="#0078d4" /></linearGradient></defs>
      <path d="M0 1a1 1 0 0 1 1-1h13v14H0zM15 0h13a1 1 0 0 1 1 1v13H15zM0 15h14v14H1a1 1 0 0 1-1-1zM15 15h14v13a1 1 0 0 1-1 1H15z" fill="url(#win)" />
    </svg>
    <div className="ml-[18px] flex h-[38px] w-[123px] items-center rounded-full bg-[#f2f8e9] pl-[28px] shadow-[0_1px_1px_rgba(90,120,60,0.2)]">
      <svg viewBox="0 0 18 18" className="size-[18px]" fill="none" stroke="#1a1a1a" strokeWidth="1.700"><circle cx="10.500" cy="7" r="5.800" /><path d="M6.500 11.200L1 17" /></svg>
      <span className="ml-[6px] text-[14.500px] tracking-[-0.2px]">Search</span>
    </div>
    <div className="ml-[5px] flex h-full">
      {apps.map((a, n) => (
        <div key={n} className="relative flex w-[55px] items-center justify-center pb-px">
          {a.active && <div className="absolute left-[4px] top-[5px] h-[48px] w-[48px] rounded-[5px] border border-[#e3efcf] bg-[#ebf5da]" />}
          <div className="relative">{a.i}</div>
          {a.run && (
            <div className={a.active ? "absolute bottom-[5px] h-[4px] w-[20px] rounded-full bg-[#0078d4]" : "absolute bottom-[6px] h-[4px] w-[8px] rounded-full bg-[#7e8a6b]"} />
          )}
        </div>
      ))}
    </div>
    <svg viewBox="0 0 16 16" className="mb-[2px] ml-[28px] size-4" fill="none" stroke="#1a1a1a" strokeWidth="1.500"><path d="M1 12l7-7.500 7 7.500" /></svg>
    <svg viewBox="0 0 16 16" className="mb-[3px] ml-[24px] size-4"><path d="M.5.5h15v15H.5z" fill="#8f9a7e" stroke="#aab594" /></svg>
    <svg viewBox="0 0 20 16" className="mb-px ml-[22px] h-4 w-5" fill="none" stroke="#1a1a1a" strokeWidth="1.500"><path d="M1 6a12.500 12.500 0 0 1 18 0M3.700 8.700a8.800 8.800 0 0 1 12.600 0M6.400 11.400a5 5 0 0 1 7.200 0" /><circle cx="10" cy="14" r="1.200" fill="#1a1a1a" /></svg>
    <svg viewBox="0 0 20 16" className="mb-px ml-[10px] h-4 w-5" fill="none" stroke="#1a1a1a" strokeWidth="1.400"><path d="M1 5.500h3l4-4v13l-4-4H1z" strokeLinejoin="round" /><path d="M11 5.500a4 4 0 0 1 0 5M13.500 3.500a7 7 0 0 1 0 9M16 1.500a10 10 0 0 1 0 13" /></svg>
    <svg viewBox="0 0 20 14" className="mb-px ml-[10px] h-[14px] w-5"><rect x=".8" y="1.300" width="15.500" height="11.400" rx="2.500" fill="none" stroke="#1a1a1a" strokeWidth="1.500" /><path d="M3.200 3.700h5v6.600h-5z" fill="#1a1a1a" /><path d="M18.500 5v4" stroke="#1a1a1a" strokeWidth="2" /></svg>
    <div className="ml-[10px] w-[73px] whitespace-nowrap pb-[3px] text-right text-[15px] leading-[20px] tracking-[-0.3px]">
      <div>3:07 PM</div>
      <div>2/7/2023</div>
    </div>
    <div className="mb-px ml-[9px] flex size-5 items-center justify-center rounded-full bg-[#0078d4] text-[13px] text-white">1</div>
  </footer>
);

export default function App() {
  return (
    <div className="flex h-[1080px] w-[1920px] flex-col overflow-hidden bg-white font-['Open_Sans','Noto_Sans',sans-serif]">
      <TabStrip />
      <Toolbar />
      <Bookmarks />
      <div className="flex h-[891px] w-full shrink-0">
        <Page />
        <Scrollbar />
      </div>
      <Taskbar />
    </div>
  );
}
